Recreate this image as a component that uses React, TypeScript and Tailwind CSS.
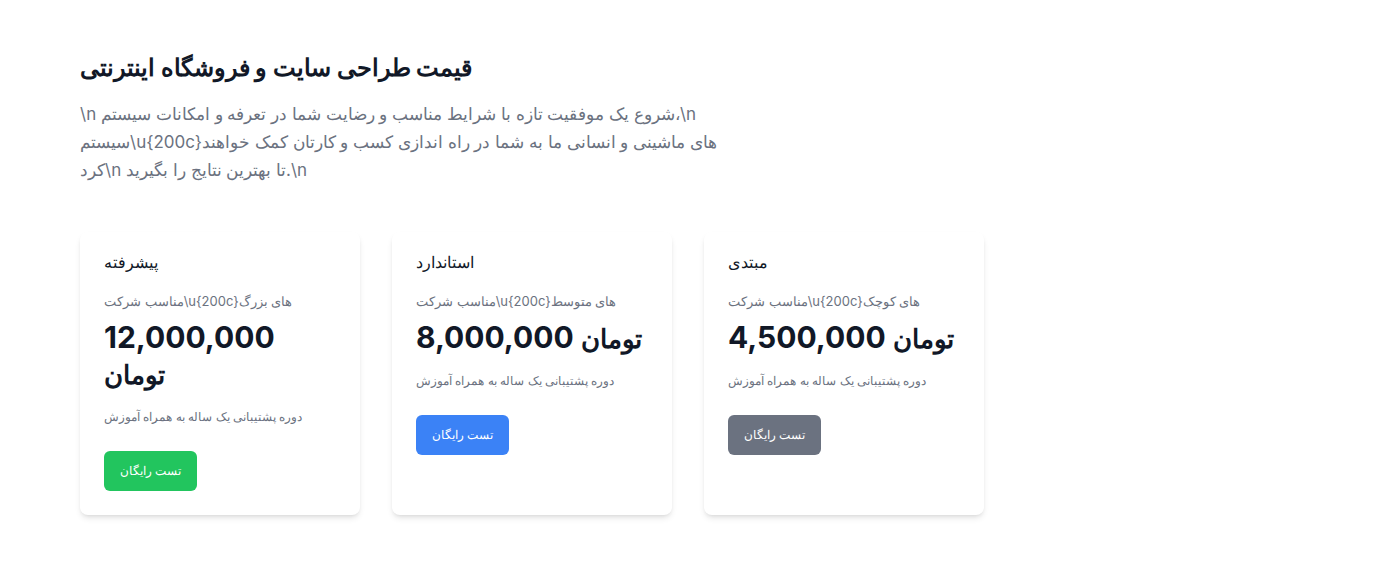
import React from "react";

type Plan = {
  title: string;
  subtitle: string;
  amount: string;
  note: string;
  btn: string;
};

const plans: Plan[] = [
  {
    title: "پیشرفته",
    subtitle: "مناسب شرکت\\u{200c}های بزرگ",
    amount: "12,000,000",
    note: "دوره پشتیبانی یک ساله به همراه آموزش",
    btn: "bg-[#22c55e]",
  },
  {
    title: "استاندارد",
    subtitle: "مناسب شرکت\\u{200c}های متوسط",
    amount: "8,000,000",
    note: "دوره پشتیبانی یک ساله به همراه آموزش",
    btn: "bg-[#3b82f6]",
  },
  {
    title: "مبتدی",
    subtitle: "مناسب شرکت\\u{200c}های کوچک",
    amount: "4,500,000",
    note: "دوره پشتیبانی یک ساله به همراه آموزش",
    btn: "bg-[#6b7280]",
  },
];

// literal escapes are part of the copy as it shows on the page
const intro =
  "\\n شروع یک موفقیت تازه با شرایط مناسب و رضایت شما در تعرفه و امکانات سیستم،\\n سیستم\\u{200c}های ماشینی و انسانی ما به شما در راه اندازی کسب و کارتان کمک خواهند کرد\\n تا بهترین نتایج را بگیرید.\\n";

const PlanCard: React.FC<{ plan: Plan }> = ({ plan }) => (
  <div className="bg-white p-6 rounded-lg shadow-md">
    <h3 className="text-base leading-6 -mt-1.5 mb-[17px] text-[#111827]">{plan.title}</h3>
    <p className="text-[13px] leading-5 text-[#6b7280] mb-2">{plan.subtitle}</p>
    <p className="text-3xl font-bold text-[#111827] mb-4">
      {plan.amount} <span className="text-[26px]">تومان</span>
    </p>
    <p className="text-xs leading-5 text-[#6b7280] mb-6">{plan.note}</p>
    <button className={`${plan.btn} text-white text-xs leading-5 px-4 py-2.5 rounded-md`}>
      تست رایگان
    </button>
  </div>
);

const App: React.FC = () => {
  return (
    <div className="min-h-screen bg-white font-['Inter',sans-serif]">
      <div className="max-w-7xl mx-auto px-8 py-12">
        <h1 className="text-2xl font-bold text-[#111827] mt-1 mb-4">
          قیمت طراحی سایت و فروشگاه اینترنتی
        </h1>
        <p className="max-w-2xl text-[17px] leading-7 text-[#6b7280] mb-12">{intro}</p>

        <div className="grid grid-cols-4 gap-8">
          {plans.map((p) => (
            <PlanCard key={p.title} plan={p} />
          ))}
        </div>
      </div>
    </div>
  );
};

export default App;
